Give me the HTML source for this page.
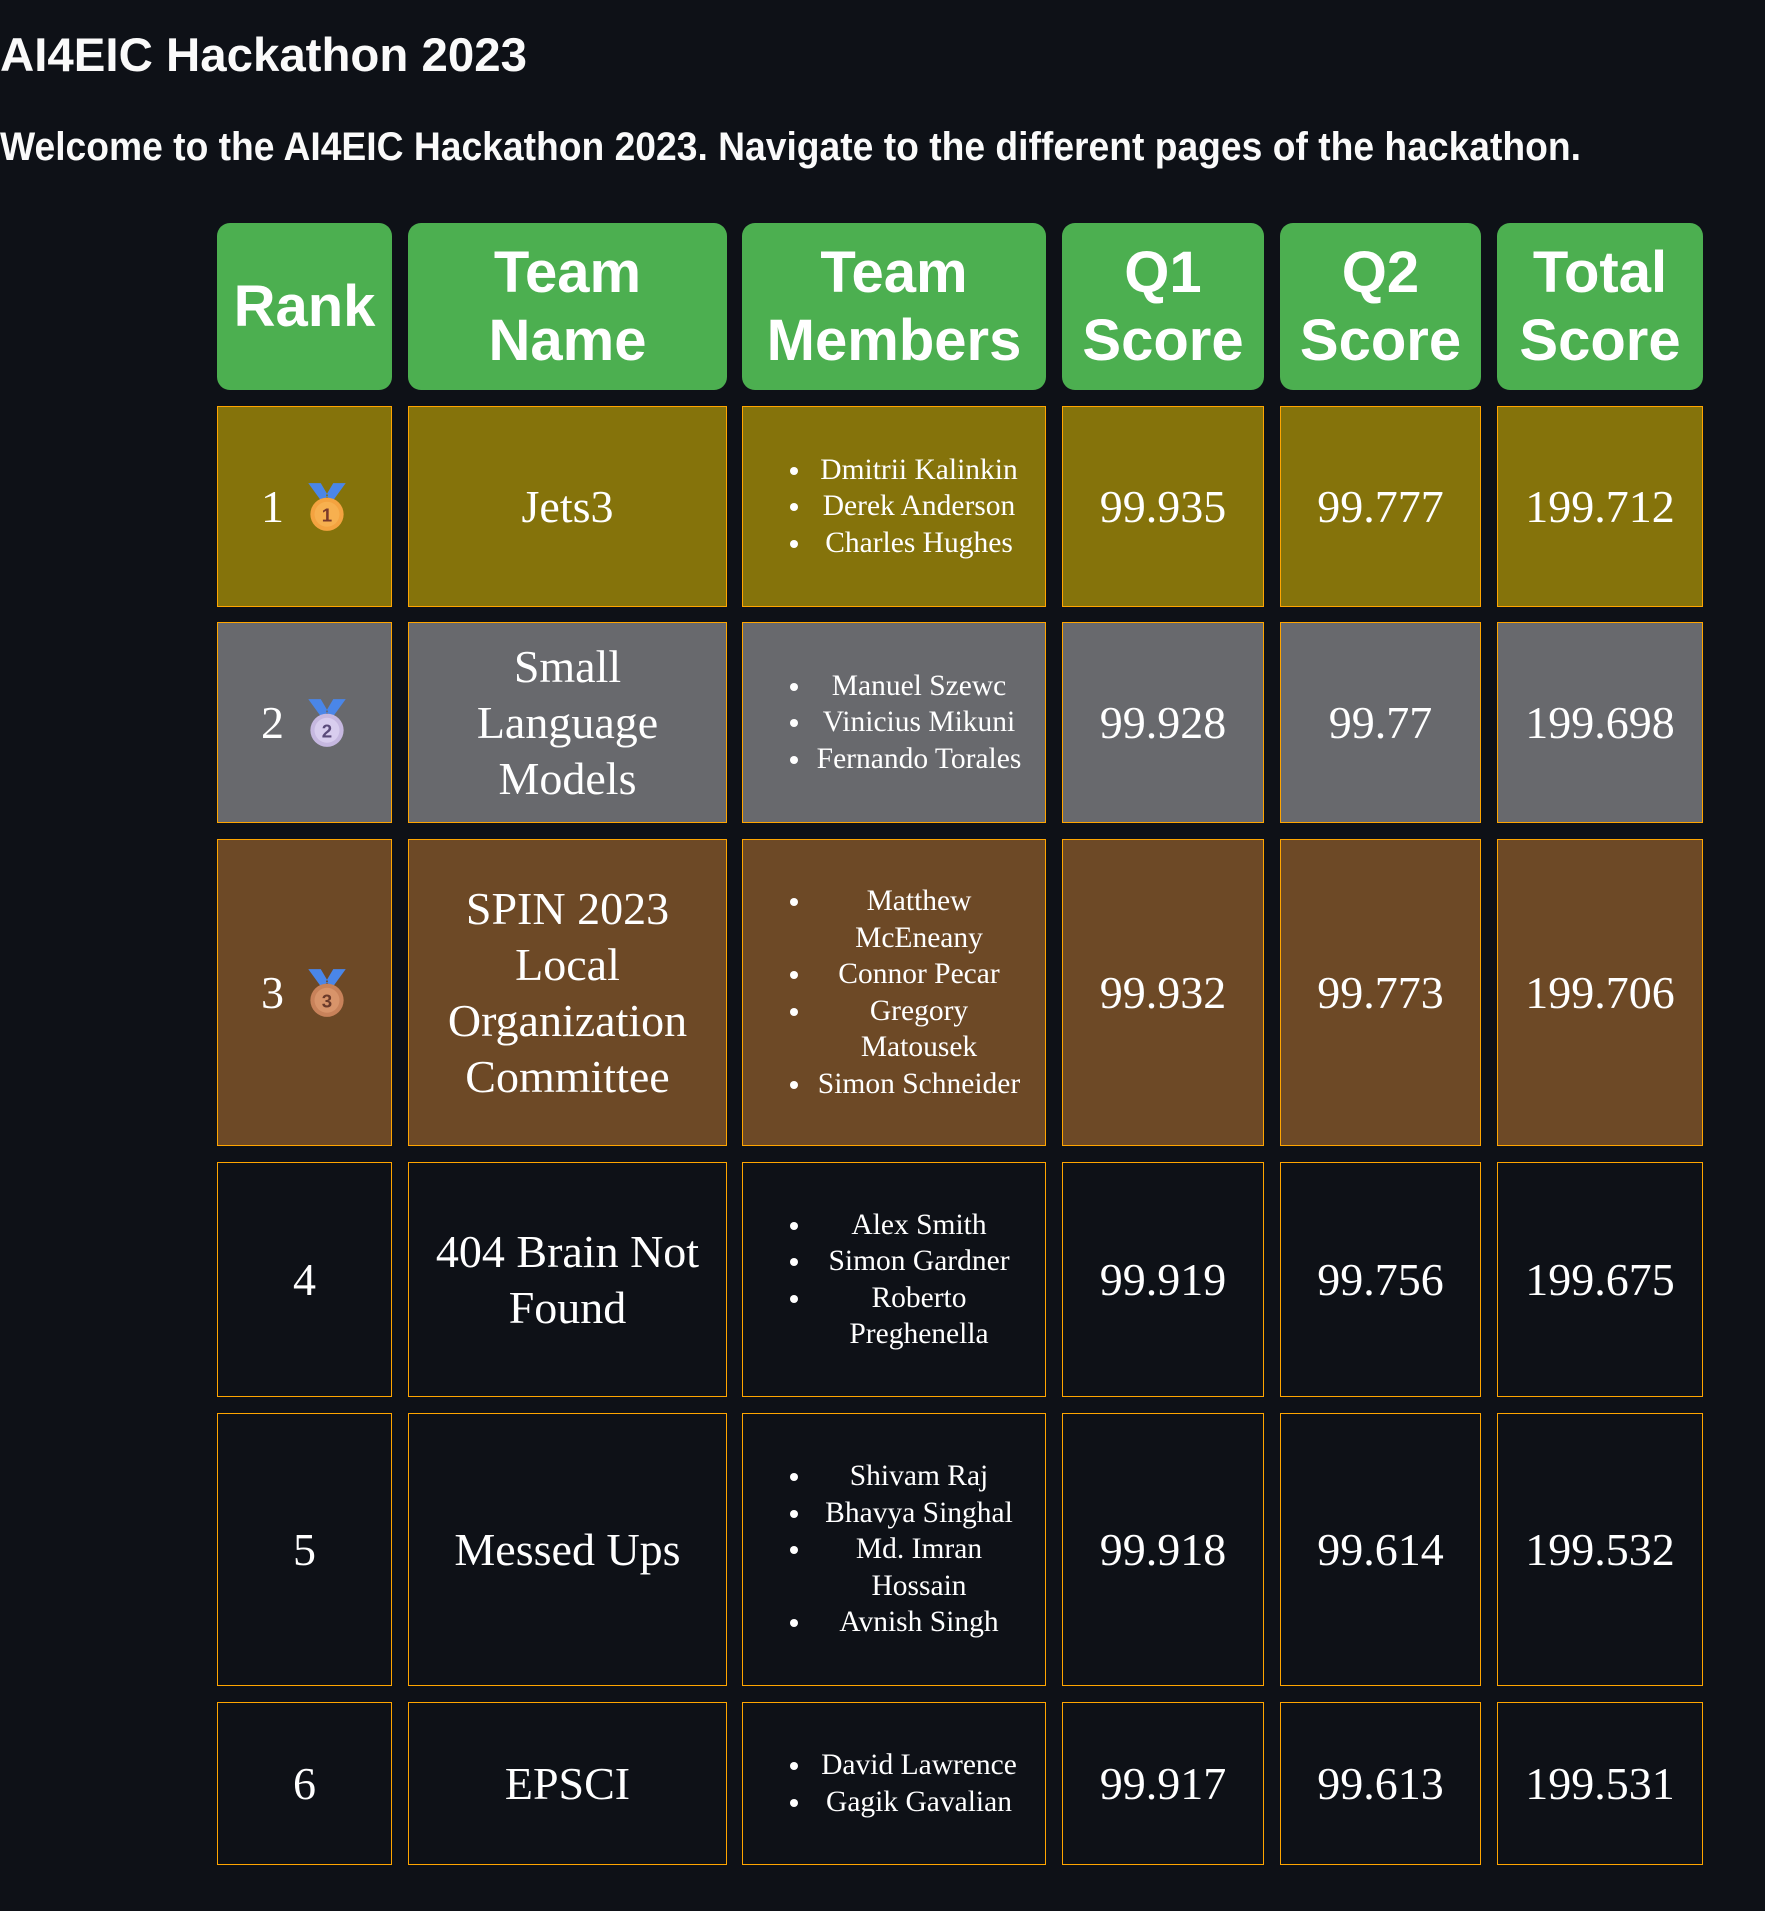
<!DOCTYPE html>
<html><head><meta charset="utf-8">
<style>
html,body{margin:0;padding:0;background:#0e1117;width:1765px;height:1911px;overflow:hidden}
svg.t{position:absolute;left:0;top:0}
.c{position:absolute;box-sizing:border-box;display:flex;align-items:center;justify-content:center;text-align:center;color:#fff;font-family:"Liberation Serif",serif;font-size:46px;line-height:56px;border:1.5px solid #ffa500}
.h{background:#4caf50;border:none;border-radius:13px;font:bold 58px/68px "Liberation Sans",Arial,sans-serif}
.c.l{justify-content:flex-start}
ul{margin:0 0 0 70px;padding:0;width:212px;font-size:29.5px;line-height:36.5px;text-align:center;list-style:disc outside}
.g{background:#85730b}.s{background:#68696d}.b{background:#6d4926}
.m{display:inline-block;margin-left:22px;vertical-align:middle}
</style></head><body>
<svg class="t" width="1765" height="180">
<text x="0" y="71" font-family="Liberation Sans,sans-serif" font-weight="bold" font-size="47" fill="#fafafa" textLength="527" lengthAdjust="spacingAndGlyphs">AI4EIC Hackathon 2023</text>
<text x="0" y="160" font-family="Liberation Sans,sans-serif" font-weight="bold" font-size="40" fill="#fafafa" textLength="1581" lengthAdjust="spacingAndGlyphs">Welcome to the AI4EIC Hackathon 2023. Navigate to the different pages of the hackathon.</text>
</svg>

<div class="c h" style="left:217px;top:223px;width:175px;height:167px">Rank</div>
<div class="c h" style="left:408px;top:223px;width:319px;height:167px">Team<br>Name</div>
<div class="c h" style="left:742px;top:223px;width:304px;height:167px">Team<br>Members</div>
<div class="c h" style="left:1062px;top:223px;width:202px;height:167px">Q1<br>Score</div>
<div class="c h" style="left:1280px;top:223px;width:201px;height:167px">Q2<br>Score</div>
<div class="c h" style="left:1497px;top:223px;width:206px;height:167px">Total<br>Score</div>

<div class="c g" style="left:217px;top:406px;width:175px;height:201px">1<svg class="m" width="42" height="52" viewBox="0 0 40 50"><path d="M2 2h12l7 12-6 6zM38 2H26l-7 12 6 6z" fill="#4a86e8"/><circle cx="20" cy="32" r="16" fill="#f4a340"/><circle cx="20" cy="32" r="12" fill="#f7b04f"/><text x="20" y="39" font-size="18" font-family="Liberation Sans" font-weight="bold" text-anchor="middle" fill="#7a3a2a">1</text></svg></div>
<div class="c g" style="left:408px;top:406px;width:319px;height:201px">Jets3</div>
<div class="c g l" style="left:742px;top:406px;width:304px;height:201px"><ul><li>Dmitrii Kalinkin</li><li>Derek Anderson</li><li>Charles Hughes</li></ul></div>
<div class="c g" style="left:1062px;top:406px;width:202px;height:201px">99.935</div>
<div class="c g" style="left:1280px;top:406px;width:201px;height:201px">99.777</div>
<div class="c g" style="left:1497px;top:406px;width:206px;height:201px">199.712</div>

<div class="c s" style="left:217px;top:622px;width:175px;height:201px">2<svg class="m" width="42" height="52" viewBox="0 0 40 50"><path d="M2 2h12l7 12-6 6zM38 2H26l-7 12 6 6z" fill="#4a86e8"/><circle cx="20" cy="32" r="16" fill="#c6b8e0"/><circle cx="20" cy="32" r="12" fill="#d8cdee"/><text x="20" y="39" font-size="18" font-family="Liberation Sans" font-weight="bold" text-anchor="middle" fill="#5a4a7a">2</text></svg></div>
<div class="c s" style="left:408px;top:622px;width:319px;height:201px">Small<br>Language<br>Models</div>
<div class="c s l" style="left:742px;top:622px;width:304px;height:201px"><ul><li>Manuel Szewc</li><li>Vinicius Mikuni</li><li>Fernando Torales</li></ul></div>
<div class="c s" style="left:1062px;top:622px;width:202px;height:201px">99.928</div>
<div class="c s" style="left:1280px;top:622px;width:201px;height:201px">99.77</div>
<div class="c s" style="left:1497px;top:622px;width:206px;height:201px">199.698</div>

<div class="c b" style="left:217px;top:839px;width:175px;height:307px">3<svg class="m" width="42" height="52" viewBox="0 0 40 50"><path d="M2 2h12l7 12-6 6zM38 2H26l-7 12 6 6z" fill="#4a86e8"/><circle cx="20" cy="32" r="16" fill="#c8825a"/><circle cx="20" cy="32" r="12" fill="#d8946a"/><text x="20" y="39" font-size="18" font-family="Liberation Sans" font-weight="bold" text-anchor="middle" fill="#6a3a2a">3</text></svg></div>
<div class="c b" style="left:408px;top:839px;width:319px;height:307px">SPIN 2023<br>Local<br>Organization<br>Committee</div>
<div class="c b l" style="left:742px;top:839px;width:304px;height:307px"><ul><li>Matthew McEneany</li><li>Connor Pecar</li><li>Gregory Matousek</li><li>Simon Schneider</li></ul></div>
<div class="c b" style="left:1062px;top:839px;width:202px;height:307px">99.932</div>
<div class="c b" style="left:1280px;top:839px;width:201px;height:307px">99.773</div>
<div class="c b" style="left:1497px;top:839px;width:206px;height:307px">199.706</div>

<div class="c" style="left:217px;top:1162px;width:175px;height:235px">4</div>
<div class="c" style="left:408px;top:1162px;width:319px;height:235px">404 Brain Not<br>Found</div>
<div class="c l" style="left:742px;top:1162px;width:304px;height:235px"><ul><li>Alex Smith</li><li>Simon Gardner</li><li>Roberto Preghenella</li></ul></div>
<div class="c" style="left:1062px;top:1162px;width:202px;height:235px">99.919</div>
<div class="c" style="left:1280px;top:1162px;width:201px;height:235px">99.756</div>
<div class="c" style="left:1497px;top:1162px;width:206px;height:235px">199.675</div>

<div class="c" style="left:217px;top:1413px;width:175px;height:273px">5</div>
<div class="c" style="left:408px;top:1413px;width:319px;height:273px">Messed Ups</div>
<div class="c l" style="left:742px;top:1413px;width:304px;height:273px"><ul><li>Shivam Raj</li><li>Bhavya Singhal</li><li>Md. Imran Hossain</li><li>Avnish Singh</li></ul></div>
<div class="c" style="left:1062px;top:1413px;width:202px;height:273px">99.918</div>
<div class="c" style="left:1280px;top:1413px;width:201px;height:273px">99.614</div>
<div class="c" style="left:1497px;top:1413px;width:206px;height:273px">199.532</div>

<div class="c" style="left:217px;top:1702px;width:175px;height:163px">6</div>
<div class="c" style="left:408px;top:1702px;width:319px;height:163px">EPSCI</div>
<div class="c l" style="left:742px;top:1702px;width:304px;height:163px"><ul><li>David Lawrence</li><li>Gagik Gavalian</li></ul></div>
<div class="c" style="left:1062px;top:1702px;width:202px;height:163px">99.917</div>
<div class="c" style="left:1280px;top:1702px;width:201px;height:163px">99.613</div>
<div class="c" style="left:1497px;top:1702px;width:206px;height:163px">199.531</div>
</body></html>
